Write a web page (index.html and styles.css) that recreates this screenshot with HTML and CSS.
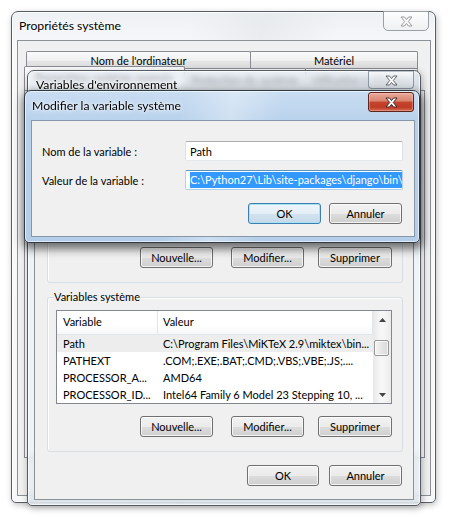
FILE: index.html
```html
<!DOCTYPE html>
<html lang="fr">
<head>
<meta charset="utf-8">
<title>Propriétés système</title>
<link rel="stylesheet" href="styles.css">
</head>
<body>
<div class="desk">

  <section class="win outer">
    <header class="titlebar">
      <span class="title">Propriétés système</span>
      <span class="close close-idle"><svg width="13" height="11" viewBox="0 0 13 11"><polygon points="1,1 4.5,1 6.5,3.6 8.5,1 12,1 8.3,5.5 12,10 8.5,10 6.5,7.4 4.5,10 1,10 4.7,5.5"/></svg></span>
    </header>
    <div class="client outer-client">
      <div class="tabrow row-back">
        <span class="tab tab-nom">Nom de l'ordinateur</span>
        <span class="tab tab-mat">Matériel</span>
      </div>
      <div class="tabrow row-front">
        <span class="tab tab-sel">Paramètres système avancés</span>
        <span class="tab tab-prot">Protection du système</span>
        <span class="tab tab-dist">Utilisation à distance</span>
      </div>
      <div class="tabpage"></div>
    </div>
  </section>

  <section class="win env">
    <header class="titlebar">
      <span class="title">Variables d'environnement</span>
      <span class="close close-env"><svg width="13" height="11" viewBox="0 0 13 11"><polygon points="1,1 4.5,1 6.5,3.6 8.5,1 12,1 8.3,5.5 12,10 8.5,10 6.5,7.4 4.5,10 1,10 4.7,5.5"/></svg></span>
    </header>
    <div class="client env-client">
      <div class="group group-user">
        <div class="list list-user"></div>
        <div class="btnrow">
          <button class="btn w73">Nouvelle...</button>
          <button class="btn w73 gap18">Modifier...</button>
          <button class="btn w74 gap14">Supprimer</button>
        </div>
      </div>

      <div class="group group-sys">
        <span class="group-label">Variables système</span>
        <div class="list list-sys">
          <div class="list-main">
            <div class="list-head"><span class="col1">Variable</span><span class="col2">Valeur</span></div>
            <div class="row row-sel"><span class="col1">Path</span><span class="col2">C:\Program Files\MiKTeX 2.9\miktex\bin...</span></div>
            <div class="row"><span class="col1">PATHEXT</span><span class="col2">.COM;.EXE;.BAT;.CMD;.VBS;.VBE;.JS;....</span></div>
            <div class="row"><span class="col1">PROCESSOR_A...</span><span class="col2">AMD64</span></div>
            <div class="row"><span class="col1">PROCESSOR_ID...</span><span class="col2">Intel64 Family 6 Model 23 Stepping 10, ...</span></div>
          </div>
          <div class="vscroll">
            <span class="sb-arrow"><svg width="7" height="4" viewBox="0 0 7 4"><polygon points="0,4 3.5,0 7,4"/></svg></span>
            <span class="sb-track"><span class="sb-thumb"></span></span>
            <span class="sb-arrow"><svg width="7" height="4" viewBox="0 0 7 4"><polygon points="0,0 7,0 3.5,4"/></svg></span>
          </div>
        </div>
        <div class="btnrow">
          <button class="btn w73">Nouvelle...</button>
          <button class="btn w73 gap18">Modifier...</button>
          <button class="btn w74 gap14">Supprimer</button>
        </div>
      </div>

      <div class="dlgbtns env-btns">
        <button class="btn w72">OK</button>
        <button class="btn w73">Annuler</button>
      </div>
    </div>
  </section>

  <section class="win modify">
    <header class="titlebar">
      <span class="title">Modifier la variable système</span>
      <span class="close close-hot"><svg width="13" height="11" viewBox="0 0 13 11"><polygon points="1,1 4.5,1 6.5,3.6 8.5,1 12,1 8.3,5.5 12,10 8.5,10 6.5,7.4 4.5,10 1,10 4.7,5.5"/></svg></span>
    </header>
    <div class="client mod-client">
      <div class="form">
        <span class="flabel">Nom de la variable :</span>
        <div class="edit">Path</div>
        <span class="flabel">Valeur de la variable :</span>
        <div class="edit edit-focus"><span class="selected">C:\Python27\Lib\site-packages\django\bin\</span></div>
      </div>
      <div class="dlgbtns mod-btns">
        <button class="btn w73 default">OK</button>
        <button class="btn w73">Annuler</button>
      </div>
    </div>
  </section>

</div>
</body>
</html>
```

FILE: styles.css
```css
* { box-sizing: border-box; margin: 0; padding: 0; }
html, body { width: 450px; height: 517px; overflow: hidden; background: #fff; }
body { font-family: Lato, "Liberation Sans", sans-serif; font-size: 11px; color: #000; }

.desk { position: relative; width: 450px; height: 517px; }

/* ---------- windows ---------- */
.win {
  position: absolute;
  display: flex;
  flex-direction: column;
  border: 1px solid #555c63;
  border-radius: 7px 7px 5px 5px;
}
.titlebar { display: flex; align-items: flex-start; flex: none; }
.title {
  font-size: 12.2px;
  white-space: nowrap;
  text-shadow: 0 0 6px #fff, 0 0 3px #fff;
}
.close {
  margin-left: auto;
  width: 46px;
  display: flex;
  align-items: center;
  justify-content: center;
}
.close svg polygon { stroke-width: 1; stroke-linejoin: miter; }
.client {
  flex: 1;
  min-height: 0;
  display: flex;
  flex-direction: column;
  background: #f0f0f0;
  border: 1px solid #8c9196;
}

/* outer window */
.outer {
  z-index: 1;
  left: 11px; top: 11px; width: 425px; height: 492px;
  background: linear-gradient(100deg, rgba(255,255,255,0) 35%, rgba(225,228,232,.55) 50%, rgba(255,255,255,0) 65%),
              linear-gradient(180deg, #eef1f4 0%, #f8f9fb 40px, #f5f7f9 100%);
  box-shadow: inset 0 0 0 1px rgba(255,255,255,.85), 1px 2px 6px rgba(0,0,0,.25);
}
.outer .titlebar { height: 28px; padding-left: 7px; }
.outer .title { line-height: 27px; }
.close-idle {
  height: 20px; margin-top: -1px; margin-right: 6px;
  border: 1px solid #9aa0a6; border-radius: 0 0 5px 5px;
  background: linear-gradient(#fdfdfd, #eef0f2);
}
.close-idle polygon { fill: #fbfbfb; stroke: #9a9a9a; }

.outer-client { margin: 0 4px 6px 5px; padding: 10px 5px 0 6px; }

.tabrow { display: flex; flex: none; }
.row-back { margin-left: 2px; height: 18px; }
.row-front { margin-top: -1px; align-items: flex-end; height: 22px; position: relative; }
.tab {
  display: block;
  text-align: center;
  white-space: nowrap;
  border: 1px solid #898c95;
  border-bottom: none;
  border-radius: 2px 2px 0 0;
  background: linear-gradient(#fbfbfb 0%, #f0f0f0 50%, #e5e5e5 51%, #dcdcdc 100%);
}
.row-back .tab { height: 18px; line-height: 17px; }
.tab-nom { width: 225px; }
.tab-mat { width: 168px; margin-left: -1px; }
.row-front .tab { height: 22px; line-height: 21px; }
.tab-sel { width: 161px; height: 24px !important; background: #fcfcfc; position: relative; z-index: 1; }
.tab-prot { width: 122px; margin-left: -1px; }
.tab-dist { width: 113px; margin-left: -1px; }
.tabpage { flex: none; height: 368px; border: 1px solid #898c95; background: #fcfcfc; }

/* environment window */
.env {
  z-index: 2;
  left: 27px; top: 70px; width: 394px; height: 436px;
  background: rgba(224,235,244,.55);
  -webkit-backdrop-filter: blur(3px);
  backdrop-filter: blur(3px);
  box-shadow: inset 0 0 0 1px rgba(255,255,255,.7), 1px 2px 7px rgba(0,0,0,.3);
}
.env .titlebar { height: 27px; padding-left: 8px; }
.env .title { line-height: 27px; text-shadow: 0 0 8px #fff, 0 0 4px #fff, 0 0 2px #fff; }
.close-env {
  height: 18px; margin-right: 6px;
  border: 1px solid #8d98a3; border-top-color: rgba(141,152,163,.5); border-radius: 0 0 4px 4px;
  background: linear-gradient(rgba(255,255,255,.55), rgba(220,226,232,.6));
}
.close-env polygon { fill: #fff; stroke: #5f6368; }

.env-client { margin: 0 6px 5px 6px; padding: 12px 10px 0 12px; }

.group {
  position: relative;
  flex: none;
  display: flex;
  flex-direction: column;
  border: 1px solid #d5dfe5;
  border-radius: 3px;
  box-shadow: inset 1px 1px 0 #fff;
  padding: 12px 10px 14px 8px;
}
.group-sys { margin-top: 14px; }
.group-label {
  position: absolute; left: 5px; top: -9px;
  padding: 0 1px; line-height: 15px;
  background: #f0f0f0; white-space: nowrap;
}

.list {
  display: flex;
  flex: none;
  border: 1px solid #828790;
  background: #fff;
  overflow: hidden;
}
.list-user { height: 111px; }
.list-sys { height: 94px; }
.list-main { flex: 1; min-width: 0; display: flex; flex-direction: column; }
.list-head {
  display: flex; flex: none; height: 24px; line-height: 22px;
  background: linear-gradient(#ffffff, #ffffff 60%, #f6f7f9);
  border-bottom: 1px solid #e2e5ea;
  border-right: 1px solid #e2e5ea;
}
.list-head .col1 { border-right: 1px solid #e2e5ea; }
.row { display: flex; flex: none; height: 17px; line-height: 17px; white-space: nowrap; }
.row-sel { background: #ededed; }
.col1 { width: 101px; flex: none; padding-left: 6px; white-space: nowrap; overflow: hidden; }
.col2 { flex: 1; padding-left: 5px; white-space: nowrap; overflow: hidden; }

.vscroll {
  width: 18px; flex: none;
  display: flex; flex-direction: column;
  background: linear-gradient(90deg, #e8e8e8, #f6f6f6 40%, #f6f6f6 60%, #ebebeb);
}
.sb-arrow { height: 17px; flex: none; display: flex; align-items: center; justify-content: center; }
.sb-arrow polygon { fill: #444; }
.sb-track { flex: 1; display: flex; flex-direction: column; padding: 12px 0 0 1px; }
.sb-thumb {
  width: 15px; height: 16px;
  border: 1px solid #979797; border-radius: 2px;
  background: linear-gradient(90deg, #f4f4f4, #e6e6e6 50%, #d8d8d8);
  box-shadow: inset 0 0 0 1px rgba(255,255,255,.7);
}

.btnrow { display: flex; justify-content: flex-end; margin-top: 12px; flex: none; }
.dlgbtns { display: flex; justify-content: flex-end; flex: none; }
.env-btns { margin-top: 13px; margin-right: 1px; gap: 10px; }

.btn {
  height: 21px;
  font: inherit;
  color: #000;
  text-align: center;
  line-height: 18px;
  border: 1px solid #707070;
  border-radius: 3px;
  background: linear-gradient(#f2f2f2 0%, #ebebeb 50%, #dddddd 51%, #cfcfcf 100%);
  box-shadow: inset 0 0 0 1px rgba(255,255,255,.75);
  white-space: nowrap;
}
.w72 { width: 72px; }
.w73 { width: 73px; }
.w74 { width: 74px; }
.gap18 { margin-left: 18px; }
.gap14 { margin-left: 14px; }
.btn.default {
  border-color: #3c7fb1;
  background: linear-gradient(#eef6fb 0%, #e4eef6 50%, #d3e3ef 51%, #c6d9e9 100%);
  box-shadow: inset 0 0 0 1px #a9e1f7;
}

/* modify dialog */
.modify {
  z-index: 3;
  left: 24px; top: 90px; width: 396px; height: 153px;
  border-color: #2f3a45;
  background: linear-gradient(100deg, rgba(255,255,255,0) 38%, rgba(255,255,255,.32) 50%, rgba(255,255,255,0) 62%),
              linear-gradient(180deg, #c9ddf2 0%, #b9d2ec 30px, #b4cee9 100%);
  box-shadow: inset 0 0 0 1px rgba(255,255,255,.6), 1px 4px 10px 2px rgba(0,0,0,.55);
}
.modify .titlebar { height: 29px; padding-left: 7px; }
.modify .title { line-height: 29px; }
.close-hot {
  height: 20px; margin-top: 1px; margin-right: 5px;
  border: 1px solid #5e241c; border-radius: 3px;
  background: linear-gradient(#e9aa9b 0%, #d98470 45%, #c44530 50%, #bf3b25 78%, #d5694f 100%);
  box-shadow: inset 0 0 0 1px rgba(255,220,210,.35);
}
.close-hot polygon { fill: #fff; stroke: #3d2624; }

.mod-client { margin: 0 4px 5px 6px; padding: 20px 11px 0 10px; border-color: #8797a8; }
.form {
  display: grid;
  grid-template-columns: 143px 218px;
  row-gap: 9px;
  align-items: center;
}
.flabel { white-space: nowrap; }
.edit {
  height: 20px;
  display: flex;
  align-items: center;
  overflow: hidden;
  white-space: nowrap;
  padding: 1px 1px 1px 4px;
  background: #fff;
  border: 1px solid #dbdfe6;
  border-top-color: #abadb3;
  border-bottom-color: #e3e9ef;
  border-radius: 2px;
}
.edit-focus {
  border-color: #b5cfe7;
  border-top-color: #5c93bc;
}
.selected { background: #3399ff; color: #fff; line-height: 16px; letter-spacing: 0; flex: none; }
.mod-btns { margin-top: 13px; margin-right: 1px; gap: 8px; }
```
